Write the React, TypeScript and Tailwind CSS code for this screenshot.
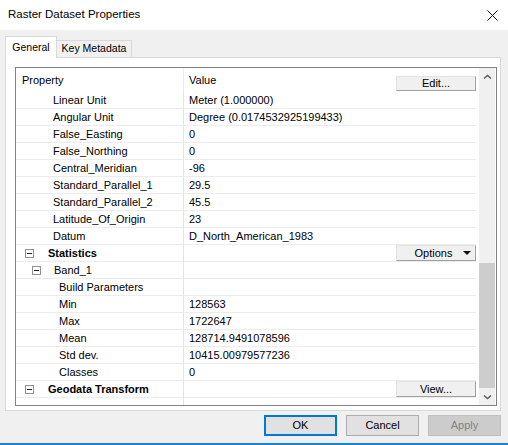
import React from 'react';

type Row = {
  label: string;
  value?: string;
  kind: 'prop' | 'stat' | 'group' | 'band';
  button?: 'options' | 'view';
};

const rows: Row[] = [
  { label: 'Linear Unit', value: 'Meter (1.000000)', kind: 'prop' },
  { label: 'Angular Unit', value: 'Degree (0.0174532925199433)', kind: 'prop' },
  { label: 'False_Easting', value: '0', kind: 'prop' },
  { label: 'False_Northing', value: '0', kind: 'prop' },
  { label: 'Central_Meridian', value: '-96', kind: 'prop' },
  { label: 'Standard_Parallel_1', value: '29.5', kind: 'prop' },
  { label: 'Standard_Parallel_2', value: '45.5', kind: 'prop' },
  { label: 'Latitude_Of_Origin', value: '23', kind: 'prop' },
  { label: 'Datum', value: 'D_North_American_1983', kind: 'prop' },
  { label: 'Statistics', kind: 'group', button: 'options' },
  { label: 'Band_1', kind: 'band' },
  { label: 'Build Parameters', kind: 'stat' },
  { label: 'Min', value: '128563', kind: 'stat' },
  { label: 'Max', value: '1722647', kind: 'stat' },
  { label: 'Mean', value: '128714.9491078596', kind: 'stat' },
  { label: 'Std dev.', value: '10415.00979577236', kind: 'stat' },
  { label: 'Classes', value: '0', kind: 'stat' },
  { label: 'Geodata Transform', kind: 'group', button: 'view' },
];

const MinusBox = () => (
  <div className="flex h-[9px] w-[9px] items-center justify-center border border-[#919191] bg-white">
    <div className="h-px w-[5px] bg-[#222]" />
  </div>
);

const GridButton = ({ children }: { children: React.ReactNode }) => (
  <div className="flex h-[16px] w-[80px] items-center justify-center border border-b-[#a0a0a0] border-l-[#e3e3e3] border-r-[#a0a0a0] border-t-[#e3e3e3] bg-[#f0f0f0]">
    {children}
  </div>
);

const Chevron = ({ down }: { down?: boolean }) => (
  <svg width="9" height="6" viewBox="0 0 9 6">
    <path
      d={down ? 'M1 1.5 L4.5 4.5 L8 1.5' : 'M1 4.5 L4.5 1.5 L8 4.5'}
      fill="none"
      stroke="#606060"
      strokeWidth="1.5"
    />
  </svg>
);

const LabelCell = ({ row }: { row: Row }) => {
  if (row.kind === 'group') {
    return (
      <div className="flex items-center pl-[9px]">
        <MinusBox />
        <span className="ml-[14px] pt-px font-bold">{row.label}</span>
      </div>
    );
  }
  if (row.kind === 'band') {
    return (
      <div className="flex items-center pl-[16px]">
        <MinusBox />
        <span className="ml-[13px] pt-px">{row.label}</span>
      </div>
    );
  }
  if (row.kind === 'stat') return <span className="pl-[43px] pt-px">{row.label}</span>;
  return <span className="pl-[37px] pt-px">{row.label}</span>;
};

export default function App() {
  return (
    <div className="flex h-[445px] w-[508px] flex-col overflow-hidden bg-[#f0f0f0] font-['Liberation_Sans',Arial,sans-serif] text-[11px] text-black">
      {/* Title bar */}
      <div className="flex h-[30px] shrink-0 items-center justify-between bg-white pl-[8px] pr-[10px]">
        <span className="text-[11.5px]">Raster Dataset Properties</span>
        <svg width="11" height="11" viewBox="0 0 11 11">
          <path d="M0.5 0.5 L10.5 10.5 M10.5 0.5 L0.5 10.5" stroke="#111" strokeWidth="1" />
        </svg>
      </div>

      {/* Tabs */}
      <div className="px-[5px] pt-[6px]">
        <div className="flex items-end">
          <div className="relative z-10 -mb-px flex h-[22px] w-[52px] items-center justify-center border border-b-0 border-[#d9d9d9] bg-white text-[10.5px]">
            General
          </div>
          <div className="flex h-[17px] w-[75px] items-center justify-center border border-b-0 border-l-0 border-[#d9d9d9] bg-[#f0f0f0] text-[10.5px]">
            Key Metadata
          </div>
        </div>

        {/* Tab page */}
        <div className="h-[354px] w-[496px] border border-[#d9d9d9] bg-white pl-[9px] pt-[9px]">
          <div className="flex h-[339px] w-[482px] border border-[#828282] bg-white">
            <div className="w-[463px]">
              <div className="w-[460px]">
                {/* Header */}
                <div className="flex h-[24px]">
                  <div className="flex w-[168px] items-center border-r border-[#ececec] pl-[6px]">Property</div>
                  <div className="flex flex-1 items-end justify-between pb-[1px] pl-[5px]">
                    <span className="self-center pt-[1px]">Value</span>
                    <div className="flex h-[15px] w-[80px] items-center justify-center border border-b-[#a0a0a0] border-l-[#e3e3e3] border-r-[#a0a0a0] border-t-[#e3e3e3] bg-[#f0f0f0]">
                      Edit...
                    </div>
                  </div>
                </div>

                {rows.map((row) => (
                  <div key={row.label} className="flex h-[17px] border-b border-[#ececec]">
                    <div className="flex w-[168px] items-center border-r border-[#e3e3e3]">
                      <LabelCell row={row} />
                    </div>
                    <div className="flex flex-1 items-center justify-between pl-[5px]">
                      <span className="pt-px">{row.value}</span>
                      {row.button === 'options' && (
                        <GridButton>
                          <span className="ml-[14px]">Options</span>
                          <svg className="ml-[11px]" width="8" height="4" viewBox="0 0 8 4">
                            <path d="M0 0 H8 L4 4 Z" fill="#111" />
                          </svg>
                        </GridButton>
                      )}
                      {row.button === 'view' && <GridButton>View...</GridButton>}
                    </div>
                  </div>
                ))}
                <div className="flex h-[7px]">
                  <div className="w-[168px] border-r border-[#e3e3e3]" />
                </div>
              </div>
            </div>

            {/* Scrollbar */}
            <div className="flex w-[16px] flex-col bg-[#f0f0f0]">
              <div className="flex h-[17px] items-center justify-center">
                <Chevron />
              </div>
              <div className="flex flex-1 flex-col justify-end">
                <div className="h-[125px] bg-[#cdcdcd]" />
              </div>
              <div className="flex h-[17px] items-center justify-center">
                <Chevron down />
              </div>
            </div>
          </div>
        </div>
      </div>

      {/* Footer buttons */}
      <div className="flex justify-end gap-[9px] pr-[7px] pt-[4px]">
        <div className="flex h-[21px] w-[73px] items-center justify-center border-2 border-[#0078d7] bg-[#e1e1e1]">
          OK
        </div>
        <div className="flex h-[21px] w-[73px] items-center justify-center border border-[#adadad] bg-[#e1e1e1]">
          Cancel
        </div>
        <div className="flex h-[21px] w-[73px] items-center justify-center border border-[#bfbfbf] bg-[#cccccc] text-[#838383]">
          Apply
        </div>
      </div>
      <div className="flex-1" />
      <div className="h-[2px] bg-[#1883d7]" />
    </div>
  );
}
